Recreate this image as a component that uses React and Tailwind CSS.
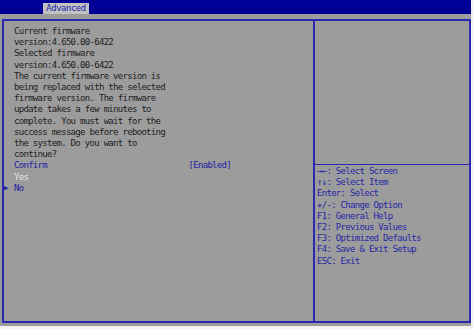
const mono = { fontFamily: '"DejaVu Sans Mono", "Liberation Mono", monospace' };

const description = [
  'Current firmware',
  'version:4.650.00-6422',
  'Selected firmware',
  'version:4.650.00-6422',
  'The current firmware version is',
  'being replaced with the selected',
  'firmware version. The firmware',
  'update takes a few minutes to',
  'complete. You must wait for the',
  'success message before rebooting',
  'the system. Do you want to',
  'continue?',
];

const help = [
  '→←: Select Screen',
  '↑↓: Select Item',
  'Enter: Select',
  '+/-: Change Option',
  'F1: General Help',
  'F2: Previous Values',
  'F3: Optimized Defaults',
  'F4: Save & Exit Setup',
  'ESC: Exit',
];

export default function App() {
  return (
    <div className="w-[474px] h-[329px] bg-[#f4f4f4]">
      <div
        className="w-[471px] h-[326px] bg-[#9c9c9c] flex flex-col text-[9px] tracking-[-0.7px] leading-[11.2px]"
        style={mono}
      >
        {/* title bar with tab */}
        <div className="h-[14px] bg-[#000096] pt-[3px] pl-[43px] flex">
          <div className="w-[46px] h-[11px] bg-[#c2c2c2] text-[#2020a8] flex items-center justify-center leading-none tracking-[-0.5px]">
            Advanced
          </div>
        </div>

        {/* main frame */}
        <div className="mt-[5px] ml-[2px] w-[469px] h-[304px] border-2 border-[#2a2ab0] flex">
          <div className="w-[311px] border-r-2 border-[#2a2ab0] pt-[5px] pl-[10px] pr-[6px]">
            {description.map((line) => (
              <div key={line} className="text-[#1c1c1c] whitespace-pre">
                {line}
              </div>
            ))}
            <div className="flex justify-between text-[#2222a4]">
              <span>Confirm</span>
              <span className="mr-[76px]">[Enabled]</span>
            </div>
            <div className="text-[#e4e4e4]">Yes</div>
            <div className="relative text-[#2222a4]">
              <span className="absolute left-[-10px] top-0 text-[7px]">▶</span>
              No
            </div>
          </div>

          <div className="flex-1 flex flex-col">
            <div className="h-[144px] border-b border-[#2a2ab0]" />
            <div className="pt-[1px] pl-[2px] text-[#2626a6]">
              {help.map((line) => (
                <div key={line} className="whitespace-pre">
                  {line}
                </div>
              ))}
            </div>
          </div>
        </div>
      </div>
    </div>
  );
}
